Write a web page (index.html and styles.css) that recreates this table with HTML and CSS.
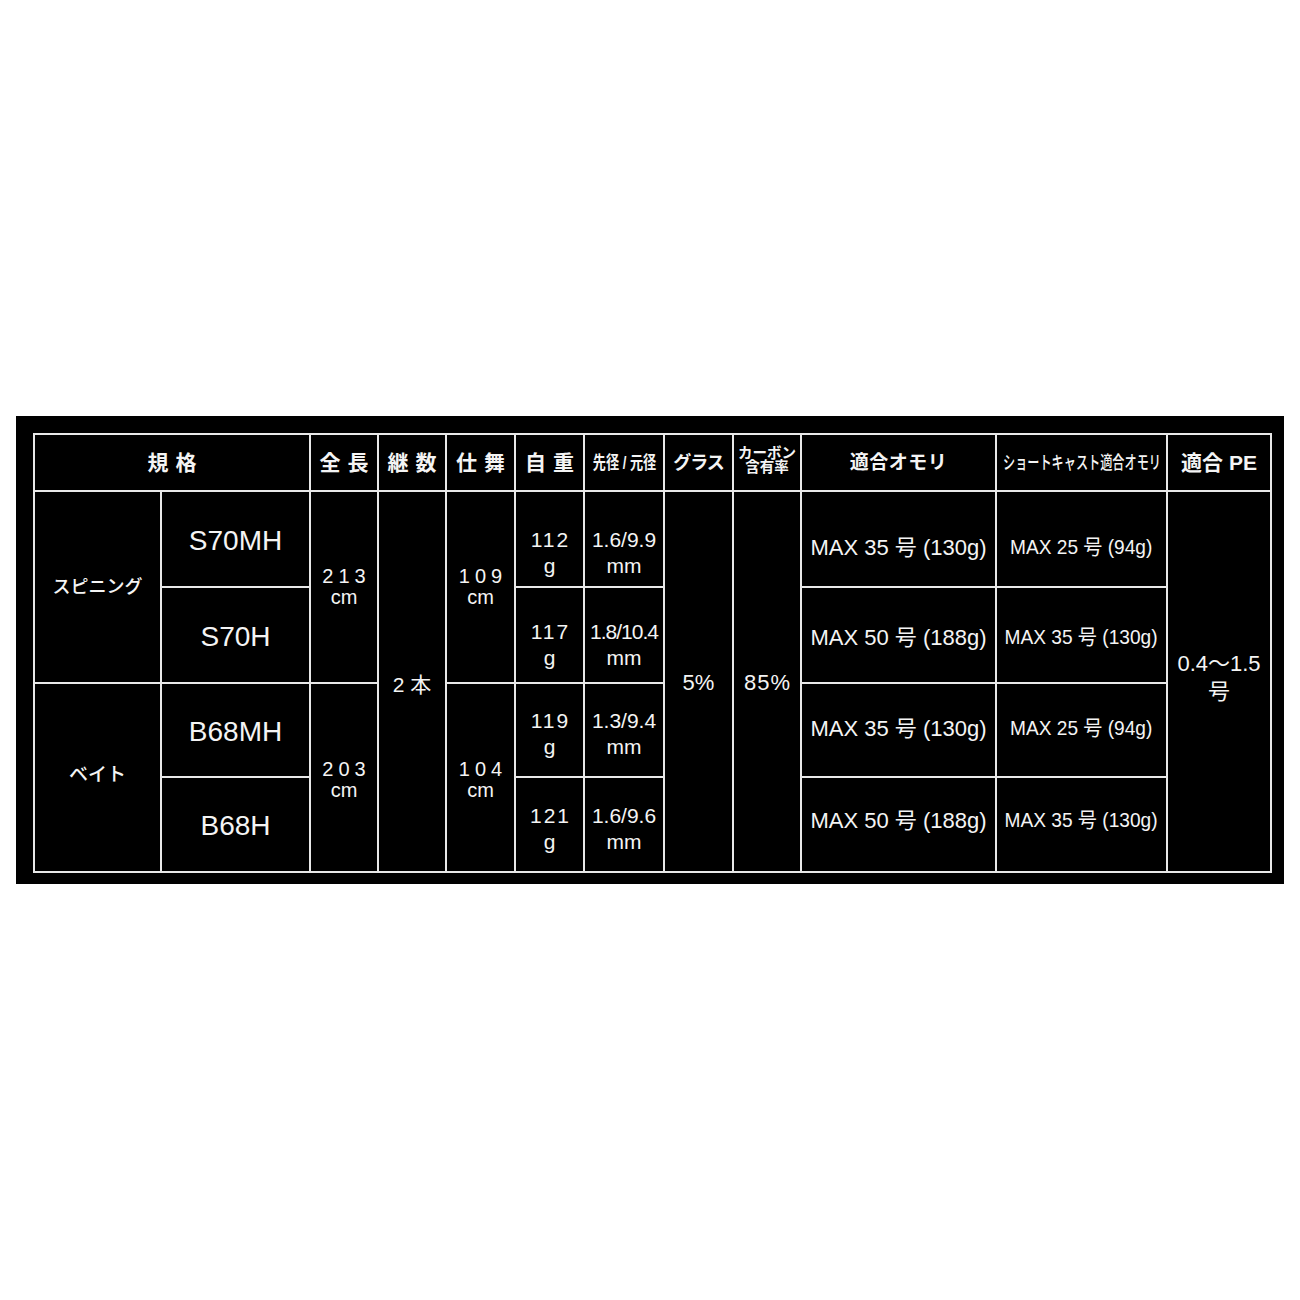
FILE: index.html
```html
<!DOCTYPE html>
<html lang="ja">
<head>
<meta charset="utf-8">
<title>Spec</title>
<link rel="stylesheet" href="styles.css">
</head>
<body>
<div class="panel">
  <table class="spec">
    <colgroup>
      <col class="c1"><col class="c2"><col class="c3"><col class="c4"><col class="c5"><col class="c6">
      <col class="c7"><col class="c8"><col class="c9"><col class="c10"><col class="c11"><col class="c12">
    </colgroup>
    <tr class="hrow">
      <th colspan="2"><span class="sp">規格</span></th>
      <th><span class="sp">全長</span></th>
      <th><span class="sp">継数</span></th>
      <th><span class="sp">仕舞</span></th>
      <th><span class="sp">自重</span></th>
      <th><div class="fx"><span class="cond dia-h">先径 / 元径</span></div></th>
      <th class="glass">グラス</th>
      <th class="carbon">カーボン<br>含有率</th>
      <th class="omo-h">適合オモリ</th>
      <th><div class="fx"><span class="cond sc-h">ショートキャスト適合オモリ</span></div></th>
      <th>適合 PE</th>
    </tr>
    <tr class="r1">
      <td rowspan="2" class="grp">スピニング</td>
      <td class="model">S70MH</td>
      <td rowspan="2" class="len"><span class="n">213</span><br>cm</td>
      <td rowspan="4" class="joint">2 本</td>
      <td rowspan="2" class="len"><span class="n">109</span><br>cm</td>
      <td class="wt"><span class="n">112</span><br>g</td>
      <td class="dia">1.6/9.9<br>mm</td>
      <td rowspan="4" class="pct">5%</td>
      <td rowspan="4" class="pct"><span class="n">85%</span></td>
      <td class="omo">MAX 35 号 (130g)</td>
      <td class="sc"><div class="fx"><span class="cond">MAX 25 号 (94g)</span></div></td>
      <td rowspan="4" class="pe">0.4〜1.5<br>号</td>
    </tr>
    <tr class="r2">
      <td class="model">S70H</td>
      <td class="wt"><span class="n">117</span><br>g</td>
      <td class="dia"><span class="tight">1.8/10.4</span><br>mm</td>
      <td class="omo">MAX 50 号 (188g)</td>
      <td class="sc"><div class="fx"><span class="cond">MAX 35 号 (130g)</span></div></td>
    </tr>
    <tr class="r3">
      <td rowspan="2" class="grp">ベイト</td>
      <td class="model">B68MH</td>
      <td rowspan="2" class="len"><span class="n">203</span><br>cm</td>
      <td rowspan="2" class="len"><span class="n">104</span><br>cm</td>
      <td class="wt"><span class="n">119</span><br>g</td>
      <td class="dia">1.3/9.4<br>mm</td>
      <td class="omo">MAX 35 号 (130g)</td>
      <td class="sc"><div class="fx"><span class="cond">MAX 25 号 (94g)</span></div></td>
    </tr>
    <tr class="r4">
      <td class="model">B68H</td>
      <td class="wt"><span class="n">121</span><br>g</td>
      <td class="dia">1.6/9.6<br>mm</td>
      <td class="omo">MAX 50 号 (188g)</td>
      <td class="sc"><div class="fx"><span class="cond">MAX 35 号 (130g)</span></div></td>
    </tr>
  </table>
</div>
</body>
</html>
```

FILE: styles.css
```css
html, body {
  margin: 0;
  padding: 0;
  background: #ffffff;
}

body {
  font-family: "Liberation Sans", "Noto Sans CJK JP", sans-serif;
  color: #f4f4f4;
}

.panel {
  margin: 416px 0 0 16px;
  width: 1268px;
  height: 468px;
  box-sizing: border-box;
  background: #000000;
  padding: 17px 0 0 17px;
}

.spec {
  border-collapse: collapse;
  table-layout: fixed;
  width: 1237px;
}

.c1 { width: 127px; }
.c2 { width: 149px; }
.c3 { width: 68px; }
.c4 { width: 68px; }
.c5 { width: 69px; }
.c6 { width: 69px; }
.c7 { width: 80px; }
.c8 { width: 69px; }
.c9 { width: 68px; }
.c10 { width: 195px; }
.c11 { width: 171px; }
.c12 { width: 104px; }

.spec th,
.spec td {
  border: 2px solid #e8e8e8;
  padding: 0;
  text-align: center;
  vertical-align: middle;
  white-space: nowrap;
  overflow: visible;
}

.spec th {
  font-weight: bold;
  font-size: 21px;
  line-height: 24px;
}

.hrow { height: 57px; }
.r1 { height: 96px; }
.r2 { height: 96px; }
.r3 { height: 94px; }
.r4 { height: 95px; }

.sp {
  letter-spacing: 7px;
  margin-right: -7px;
}

.fx {
  display: flex;
  justify-content: center;
}

.cond {
  display: inline-block;
  white-space: nowrap;
}

.dia-h {
  font-size: 18px;
  transform: scaleX(0.73);
}

.sc-h {
  font-size: 18px;
  font-weight: 500;
  transform: scaleX(0.675);
}

.spec .glass {
  font-size: 18px;
  letter-spacing: -1px;
}

.spec .carbon {
  font-size: 14.5px;
  line-height: 14px;
  padding-bottom: 6px;
}

.spec .omo-h {
  font-size: 19px;
  letter-spacing: 0.5px;
}

.spec .grp {
  font-size: 18px;
  font-weight: 500;
  font-family: "Noto Sans CJK JP", sans-serif;
  padding-bottom: 4px;
}

.spec .r3 .grp {
  font-size: 19px;
  padding-bottom: 10px;
}

.spec .model {
  font-size: 28px;
  padding-top: 3px;
}

.spec .len {
  font-size: 20px;
  line-height: 21px;
}

.spec .r3 .len {
  padding-top: 5px;
}

.len .n {
  letter-spacing: 5px;
  margin-right: -5px;
}

.spec .joint {
  font-size: 21px;
  padding-top: 2px;
}

.spec .wt,
.spec .dia {
  font-size: 21px;
  line-height: 26px;
}

.spec .r1 .wt,
.spec .r1 .dia {
  padding-top: 28px;
}

.spec .r2 .wt,
.spec .r2 .dia {
  padding-top: 20px;
}

.spec .r3 .wt,
.spec .r3 .dia,
.spec .r4 .wt,
.spec .r4 .dia {
  padding-top: 8px;
}

.wt .n {
  letter-spacing: 2px;
  margin-right: -2px;
}

.tight {
  letter-spacing: -1px;
}

.spec .pct {
  font-size: 22px;
  padding-top: 3px;
}

.pct .n {
  letter-spacing: 1px;
  margin-right: -1px;
}

.spec .omo {
  font-size: 22px;
}

.spec .r1 .omo,
.spec .r1 .sc {
  padding-top: 12px;
}

.spec .r3 .omo,
.spec .r3 .sc {
  padding-bottom: 8px;
}

.spec .r4 .omo,
.spec .r4 .sc {
  padding-bottom: 14px;
}

.sc .cond {
  font-size: 21px;
  transform: scaleX(0.91);
}

.spec .pe {
  font-size: 22px;
  line-height: 28px;
  padding-bottom: 8px;
}
```
